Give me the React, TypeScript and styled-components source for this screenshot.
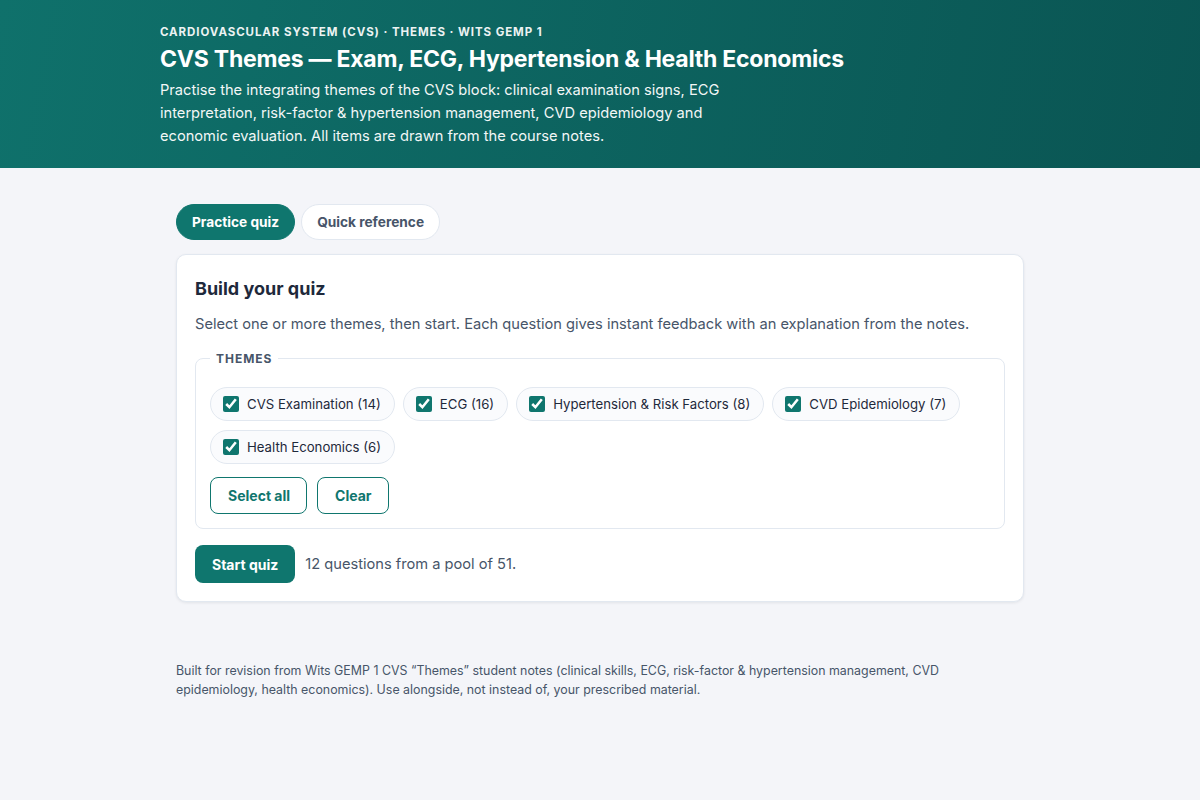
import React, { useState } from 'react';
import styled, { createGlobalStyle } from 'styled-components';

const T = {
  teal: '#0f766e',
  page: '#f4f5f9',
  card: '#ffffff',
  border: '#e2e8f0',
  text: '#1e293b',
  muted: '#475569',
} as const;

const Global = createGlobalStyle`
  html, body { margin: 0; padding: 0; }
  body {
    background: ${T.page};
    font-family: Inter, "Noto Sans", "Liberation Sans", sans-serif;
    color: ${T.text};
    -webkit-font-smoothing: antialiased;
  }
  * { box-sizing: border-box; }
`;

const Hero = styled.header`
  background: linear-gradient(100deg, #0f716b 0%, #0a5553 100%);
  color: #fff;
  padding: 25px 0 20px;
`;

const HeroInner = styled.div`
  width: 880px;
  margin: 0 auto;
`;

const Eyebrow = styled.div`
  font-size: 11.5px;
  line-height: 14px;
  font-weight: 700;
  letter-spacing: 0.08em;
  text-transform: uppercase;
  opacity: 0.92;
  margin-bottom: 5px;
`;

const Title = styled.h1`
  margin: 0 0 5px;
  font-size: 23px;
  font-weight: 700;
  letter-spacing: -0.01em;
  line-height: 30px;
`;

const Lead = styled.p`
  margin: 0;
  max-width: 580px;
  font-size: 14.65px;
  line-height: 23px;
  opacity: 0.95;
`;

const Main = styled.main`
  width: 848px;
  margin: 0 auto;
  padding: 36px 0 0;
`;

const Tabs = styled.div`
  display: flex;
  gap: 6px;
  margin-bottom: 14px;
`;

const Tab = styled.button<{ $active?: boolean }>`
  height: 36px;
  padding: 0 15px;
  border-radius: 999px;
  font-family: inherit;
  font-size: 13.7px;
  font-weight: 700;
  cursor: pointer;
  border: 1px solid ${({ $active }) => ($active ? T.teal : T.border)};
  background: ${({ $active }) => ($active ? T.teal : '#fff')};
  color: ${({ $active }) => ($active ? '#fff' : T.muted)};
`;

const Card = styled.section`
  background: ${T.card};
  border: 1px solid ${T.border};
  border-radius: 10px;
  padding: 22px 18px 18px;
  box-shadow: 0 1px 3px rgba(15, 23, 42, 0.08);
`;

const CardTitle = styled.h2`
  margin: 0 0 12px;
  font-size: 18px;
  font-weight: 700;
  line-height: 24px;
`;

const CardText = styled.p`
  margin: 0 0 16px;
  font-size: 14.65px;
  line-height: 22px;
  color: ${T.muted};
`;

const Fieldset = styled.fieldset`
  margin: 0;
  border: 1px solid ${T.border};
  border-radius: 8px;
  padding: 10px 14px 14px;
`;

const Legend = styled.legend`
  padding: 0 6px;
  margin-left: 0;
  font-size: 12px;
  font-weight: 700;
  letter-spacing: 0.08em;
  color: ${T.muted};
`;

const Chips = styled.div`
  display: flex;
  flex-wrap: wrap;
  gap: 9px 8px;
  margin-top: 11px;
`;

const Chip = styled.label`
  display: inline-flex;
  align-items: center;
  gap: 8px;
  height: 34px;
  padding: 0 13px 0 12px;
  border: 1px solid ${T.border};
  border-radius: 999px;
  background: #fafbfd;
  font-size: 13.2px;
  color: ${T.text};
  cursor: pointer;
`;

const Box = styled.input`
  width: 16px;
  height: 16px;
  margin: 0;
  accent-color: ${T.teal};
`;

const Actions = styled.div`
  display: flex;
  gap: 10px;
  margin-top: 13px;
`;

const Outline = styled.button`
  height: 37px;
  padding: 0 16px 0 17px;
  border: 1px solid ${T.teal};
  border-radius: 8px;
  background: #fff;
  color: ${T.teal};
  font-family: inherit;
  font-size: 14px;
  font-weight: 700;
  cursor: pointer;
`;

const StartRow = styled.div`
  display: flex;
  align-items: center;
  gap: 10px;
  margin-top: 16px;
`;

const Primary = styled.button`
  height: 38px;
  padding: 0 17px;
  border: none;
  border-radius: 8px;
  background: ${T.teal};
  color: #fff;
  font-family: inherit;
  font-size: 14px;
  font-weight: 700;
  cursor: pointer;
`;

const Note = styled.span`
  font-size: 14.65px;
  color: ${T.muted};
`;

const Footer = styled.footer`
  margin-top: 59px;
  font-size: 12.4px;
  line-height: 19px;
  color: ${T.muted};
`;

const THEMES = [
  { id: 'exam', label: 'CVS Examination', count: 14 },
  { id: 'ecg', label: 'ECG', count: 16 },
  { id: 'htn', label: 'Hypertension & Risk Factors', count: 8 },
  { id: 'epi', label: 'CVD Epidemiology', count: 7 },
  { id: 'econ', label: 'Health Economics', count: 6 },
];

export default function App() {
  const [tab, setTab] = useState<'quiz' | 'ref'>('quiz');
  const [picked, setPicked] = useState<string[]>(THEMES.map((t) => t.id));

  const pool = THEMES.filter((t) => picked.includes(t.id)).reduce((n, t) => n + t.count, 0);
  const toggle = (id: string) =>
    setPicked((p) => (p.includes(id) ? p.filter((x) => x !== id) : [...p, id]));

  return (
    <>
      <Global />
      <Hero>
        <HeroInner>
          <Eyebrow>Cardiovascular System (CVS) · Themes · Wits GEMP 1</Eyebrow>
          <Title>CVS Themes — Exam, ECG, Hypertension &amp; Health Economics</Title>
          <Lead>
            Practise the integrating themes of the CVS block: clinical examination signs, ECG
            interpretation, risk-factor &amp; hypertension management, CVD epidemiology and
            economic evaluation. All items are drawn from the course notes.
          </Lead>
        </HeroInner>
      </Hero>

      <Main>
        <Tabs>
          <Tab $active={tab === 'quiz'} onClick={() => setTab('quiz')}>Practice quiz</Tab>
          <Tab $active={tab === 'ref'} onClick={() => setTab('ref')}>Quick reference</Tab>
        </Tabs>

        <Card>
          <CardTitle>Build your quiz</CardTitle>
          <CardText>
            Select one or more themes, then start. Each question gives instant feedback with an
            explanation from the notes.
          </CardText>

          <Fieldset>
            <Legend>THEMES</Legend>
            <Chips>
              {THEMES.map((t) => (
                <Chip key={t.id}>
                  <Box type="checkbox" checked={picked.includes(t.id)} onChange={() => toggle(t.id)} />
                  {t.label} ({t.count})
                </Chip>
              ))}
            </Chips>
            <Actions>
              <Outline onClick={() => setPicked(THEMES.map((t) => t.id))}>Select all</Outline>
              <Outline onClick={() => setPicked([])}>Clear</Outline>
            </Actions>
          </Fieldset>

          <StartRow>
            <Primary>Start quiz</Primary>
            <Note>{Math.min(12, pool)} questions from a pool of {pool}.</Note>
          </StartRow>
        </Card>

        <Footer>
          Built for revision from Wits GEMP 1 CVS “Themes” student notes (clinical skills, ECG,
          risk-factor &amp; hypertension management, CVD epidemiology, health economics). Use
          alongside, not instead of, your prescribed material.
        </Footer>
      </Main>
    </>
  );
}
